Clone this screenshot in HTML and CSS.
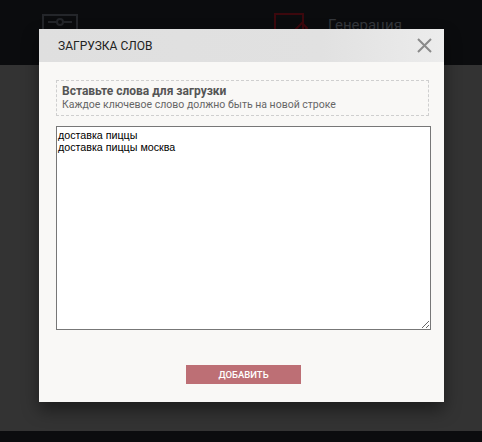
FILE: index.html
```html
<!DOCTYPE html>
<html lang="ru">
<head>
<meta charset="utf-8">
<link rel="stylesheet" href="styles.css">
</head>
<body>
<div class="page">
  <header class="topbar">
    <div class="nav-item nav-first">
      <svg class="nav-icon" width="36" height="30" viewBox="0 0 36 30"><rect x="1" y="1" width="34" height="28" fill="none" stroke="#24262a" stroke-width="2"/><line x1="6" y1="8" x2="30" y2="8" stroke="#24262a" stroke-width="2"/><circle cx="18" cy="8" r="3" fill="#0b0c0e" stroke="#24262a" stroke-width="2"/></svg>
    </div>
    <div class="nav-item nav-gen">
      <svg class="nav-icon" width="34" height="30" viewBox="0 0 34 30"><rect x="1" y="1" width="28" height="22" fill="none" stroke="#3c080d" stroke-width="2"/><path d="M10 28 L28 10 L33 15 L15 33" fill="none" stroke="#3c080d" stroke-width="2"/></svg>
      <span class="nav-label">Генерация</span>
    </div>
  </header>
  <main class="content"></main>
  <footer class="bottombar"></footer>
</div>

<div class="modal">
  <div class="modal-head">
    <span class="modal-title">ЗАГРУЗКА СЛОВ</span>
    <svg class="modal-close" width="15" height="15" viewBox="0 0 15 15"><path d="M1 1 L14 14 M14 1 L1 14" stroke="#8a8a8a" stroke-width="2"/></svg>
  </div>
  <div class="modal-body">
    <div class="hint">
      <div class="hint-title">Вставьте слова для загрузки</div>
      <div class="hint-text">Каждое ключевое слово должно быть на новой строке</div>
    </div>
    <textarea class="words">доставка пиццы
доставка пиццы москва</textarea>
    <div class="actions">
      <button class="btn-add">ДОБАВИТЬ</button>
    </div>
  </div>
</div>
</body>
</html>
```

FILE: styles.css
```css
html, body {
  margin: 0;
  padding: 0;
  width: 482px;
  height: 442px;
  overflow: hidden;
  font-family: Roboto, "Noto Sans", sans-serif;
}
.page {
  display: flex;
  flex-direction: column;
  height: 442px;
}
.topbar {
  height: 65px;
  background: #0b0c0e;
  display: flex;
  align-items: flex-start;
  padding-left: 42px;
  box-sizing: border-box;
}
.nav-item {
  display: flex;
  align-items: flex-start;
  padding-top: 14px;
}
.nav-gen {
  margin-left: 196px;
  padding-top: 13px;
}
.nav-label {
  color: #34373c;
  font-size: 15px;
  margin-left: 20px;
  margin-top: 3px;
}
.content {
  flex: 1;
  background: #333333;
}
.bottombar {
  height: 11px;
  background: #0b0c0e;
}
.modal {
  position: absolute;
  left: 39px;
  top: 29px;
  width: 405px;
  height: 373px;
  background: #f9f8f6;
  box-shadow: 0 8px 16px rgba(0,0,0,0.45);
  display: flex;
  flex-direction: column;
}
.modal-head {
  height: 33px;
  background: linear-gradient(to right, #dfdfdf 0%, #e1e1e1 70%, #ececec 100%);
  display: flex;
  align-items: center;
  justify-content: space-between;
  padding: 0 12px 0 19px;
}
.modal-title {
  font-size: 12px;
  color: #222;
  margin-top: 1px;
}
.modal-close {
  display: block;
  margin-top: -1px;
}
.modal-body {
  padding: 18px 13px 0 17px;
  display: flex;
  flex-direction: column;
}
.hint {
  width: 373px;
  height: 36px;
  box-sizing: border-box;
  border: 1px dashed #cfcfcf;
  padding: 4px 5px 0 5px;
}
.hint-title {
  font-size: 12px;
  font-weight: 700;
  color: #555;
  line-height: 13px;
}
.hint-text {
  font-size: 10.5px;
  color: #666;
  line-height: 13px;
}
.words {
  margin-top: 10px;
  width: 375px;
  height: 204px;
  box-sizing: border-box;
  border: 1px solid #777;
  background: #fff;
  font-family: "Liberation Sans", Arial, sans-serif;
  font-size: 10.7px;
  line-height: 12px;
  color: #000;
  padding: 2px 1px;
  resize: vertical;
  outline: none;
}
.actions {
  display: flex;
  justify-content: center;
  margin-top: 35px;
}
.btn-add {
  width: 115px;
  height: 19px;
  border: none;
  background: #bd6f75;
  color: #fff;
  font-family: Roboto, sans-serif;
  font-size: 9.5px;
  font-weight: 500;
  padding: 0;
  cursor: pointer;
}
```
